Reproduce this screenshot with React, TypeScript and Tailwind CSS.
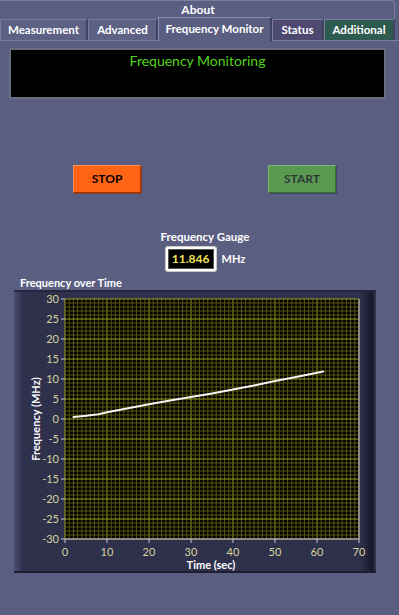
import React from 'react';

const FONT = { fontFamily: 'Lato, "Open Sans", sans-serif' };

// plot geometry (local to the graph frame)
const PX = 51;
const PY = 9;
const PW = 294;
const PH = 240;

const xPos = (t: number) => PX + (t / 70) * PW;
const yPos = (f: number) => PY + ((30 - f) / 60) * PH;

const data: [number, number][] = [
  [2, 0.5], [5, 0.8], [8, 1.2], [10, 1.7], [15, 2.7], [20, 3.7], [25, 4.6],
  [30, 5.5], [35, 6.4], [40, 7.4], [45, 8.4], [50, 9.5], [55, 10.5], [61.5, 11.85],
];

const Tab = ({ label, w, className = '' }: { label: string; w: string; className?: string }) => (
  <div
    className={`${w} h-[21px] flex items-center justify-center text-[11.5px] font-bold text-white border-t border-l border-[#7a7e9e] border-r-2 border-r-[#3f4260] ${className}`}
  >
    {label}
  </div>
);

const Chart = () => {
  const minorX = Array.from({ length: 71 }, (_, i) => i);
  const minorY = Array.from({ length: 61 }, (_, i) => i - 30);
  const yTicks = [30, 25, 20, 15, 10, 5, 0, -5, -10, -15, -20, -25, -30];
  const xTicks = [0, 10, 20, 30, 40, 50, 60, 70];
  const pts = data.map(([t, f]) => `${xPos(t).toFixed(1)},${yPos(f).toFixed(1)}`).join(' ');

  return (
    <svg width="362" height="283" viewBox="0 0 362 283" className="block">
      <defs>
        <linearGradient id="leftEdge" x1="0" x2="1" y1="0" y2="0">
          <stop offset="0" stopColor="#4a4d6c" />
          <stop offset="1" stopColor="#2e304c" />
        </linearGradient>
        <linearGradient id="rightEdge" x1="0" x2="1" y1="0" y2="0">
          <stop offset="0" stopColor="#2e304c" />
          <stop offset="0.8" stopColor="#16172a" />
          <stop offset="1" stopColor="#3a3c58" />
        </linearGradient>
      </defs>
      <rect x="0" y="0" width="362" height="283" fill="#2e304c" />
      <rect x="0" y="0" width="9" height="283" fill="url(#leftEdge)" />
      <rect x="346" y="0" width="16" height="283" fill="url(#rightEdge)" />
      <rect x="0" y="0" width="362" height="2" fill="#25263e" />
      <rect x="0" y="281" width="362" height="2" fill="#1c1d30" />

      <rect x={PX} y={PY} width={PW} height={PH} fill="#000" />
      {minorX.map((t) => (
        <line key={`vx${t}`} x1={xPos(t)} x2={xPos(t)} y1={PY} y2={PY + PH} stroke={t % 10 === 0 ? '#a0a01c' : '#58580e'} strokeWidth="1" />
      ))}
      {minorY.map((f) => (
        <line key={`hy${f}`} x1={PX} x2={PX + PW} y1={yPos(f)} y2={yPos(f)} stroke={f % 5 === 0 ? '#a0a01c' : '#58580e'} strokeWidth="1" />
      ))}
      <line x1={PX} x2={PX + PW} y1={PY + PH} y2={PY + PH} stroke="#9a9aa4" strokeWidth="1.5" />
      <line x1={PX + PW} x2={PX + PW} y1={PY} y2={PY + PH} stroke="#9a9aa4" strokeWidth="1.5" />

      <polyline points={pts} fill="none" stroke="#f4f4f4" strokeWidth="2" strokeLinecap="round" strokeLinejoin="round" />

      {yTicks.map((f) => (
        <g key={`yt${f}`}>
          <line x1={PX - 4} x2={PX} y1={yPos(f)} y2={yPos(f)} stroke="#c8c8d0" strokeWidth="1" />
          <text x={PX - 6} y={yPos(f) + 4} textAnchor="end" fontSize="11" fill="#d6d49c" style={FONT}>
            {f}
          </text>
        </g>
      ))}
      {xTicks.map((t) => (
        <g key={`xt${t}`}>
          <line x1={xPos(t)} x2={xPos(t)} y1={PY + PH} y2={PY + PH + 4} stroke="#c8c8d0" strokeWidth="1" />
          <text x={xPos(t)} y={PY + PH + 17} textAnchor="middle" fontSize="11" fill="#d6d49c" style={FONT}>
            {t}
          </text>
        </g>
      ))}
      <text x={197} y={279} textAnchor="middle" fontSize="11" fontWeight="700" fill="#ffffff" style={FONT}>
        Time (sec)
      </text>
      <text
        x={0}
        y={0}
        transform={`translate(26 ${yPos(0)}) rotate(-90)`}
        textAnchor="middle"
        fontSize="11"
        fontWeight="700"
        fill="#ffffff"
        style={FONT}
      >
        Frequency (MHz)
      </text>
    </svg>
  );
};

export default function App() {
  return (
    <div className="w-[399px] h-[615px] bg-[#5a5e80] overflow-hidden" style={FONT}>
      {/* top tab strip */}
      <div className="h-[19px] mr-[4px] border-r border-t border-[#7a7e9e] rounded-tr-sm flex items-center justify-center">
        <span className="text-[12px] font-bold text-white pl-[2px]">About</span>
      </div>

      {/* second tab row */}
      <div className="h-[22px] flex items-end border-b border-[#7a7e9e]">
        <Tab label="Measurement" w="w-[88px]" className="bg-[#5d6184]" />
        <Tab label="Advanced" w="w-[70px]" className="bg-[#5d6184]" />
        <div className="w-[114px] h-[24px] -mb-px bg-[#5a5e80] flex items-start justify-center pt-[2px] text-[11.5px] font-bold text-white border-t border-l border-[#8a8eae] border-r-2 border-r-[#3f4260]">
          Frequency Monitor
        </div>
        <Tab label="Status" w="w-[52px]" className="bg-[#4d4970]" />
        <Tab label="Additional" w="w-[71px]" className="bg-[#2f5a4f]" />
      </div>

      {/* panel */}
      <div className="px-[9px] pt-[7px] mr-[4px]">
        <div className="h-[51px] bg-black border-2 border-[#6a6c80] flex justify-center">
          <span className="text-[14px] leading-[22px] text-[#52d21c]">Frequency Monitoring</span>
        </div>

        <div className="mt-[66px] flex">
          <button className="ml-[64px] w-[68px] h-[28px] bg-[#ff6414] border border-t-[#ff9050] border-l-[#ff9050] border-r-[#b03c00] border-b-[#9c3400] shadow-[1px_1px_0_#8a3a20] text-[12px] font-bold text-black">
            STOP
          </button>
          <button className="ml-[127px] w-[68px] h-[28px] bg-[#5a9a50] border border-t-[#7cbc70] border-l-[#7cbc70] border-r-[#3c6e36] border-b-[#3a6a34] shadow-[1px_1px_0_#404860] text-[12px] font-bold text-[#2c3838]">
            START
          </button>
        </div>

        <div className="mt-[37px] flex flex-col items-center pl-[15px]">
          <span className="text-[11.5px] font-bold text-white leading-[14px]">Frequency Gauge</span>
          <div className="mt-[2px] flex items-center">
            <div className="w-[52px] h-[26px] bg-white rounded-[3px] border border-[#c8c8c8] p-[2px] shadow-[0_0_1px_#999]">
              <div className="w-full h-full bg-black border border-[#555] flex items-center justify-center text-[12px] font-bold text-[#f0e25a] leading-none">
                11.846
              </div>
            </div>
            <span className="ml-[5px] text-[11px] font-bold text-white">MHz</span>
          </div>
        </div>

        <div className="mt-[4px] ml-[11px] text-[11px] font-bold text-white leading-[13px]">Frequency over Time</div>
        <div className="mt-[1px] ml-[5px] w-[362px] h-[283px]">
          <Chart />
        </div>
      </div>
    </div>
  );
}
